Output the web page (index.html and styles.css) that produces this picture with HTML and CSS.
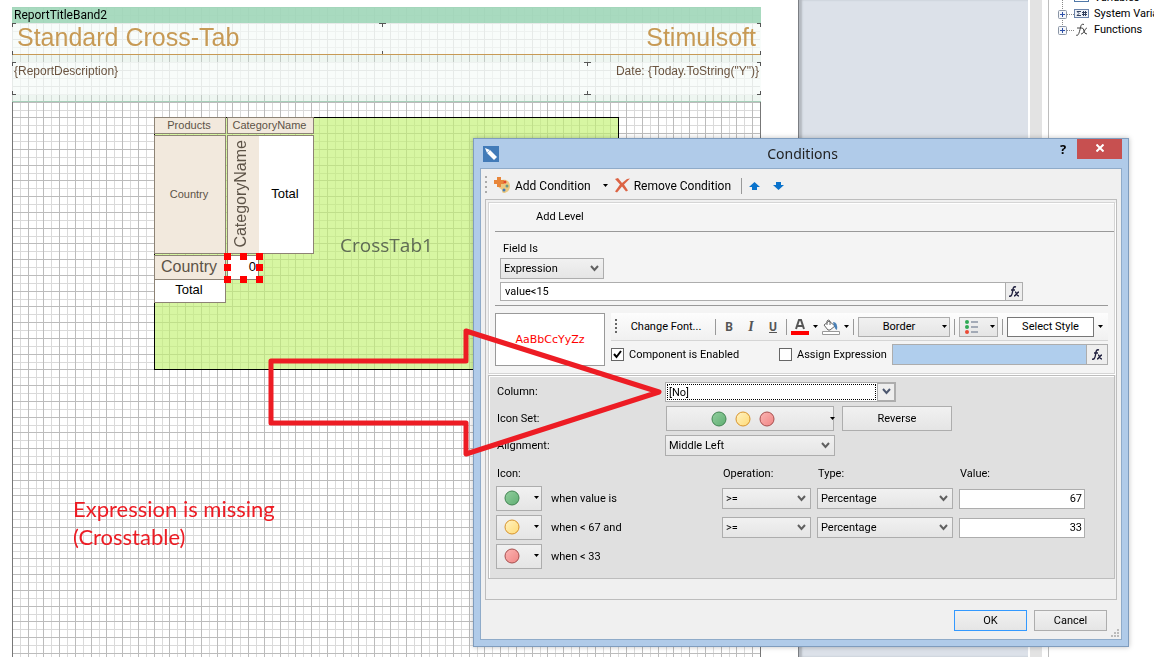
FILE: index.html
```html
<!DOCTYPE html>
<html lang="en">
<head>
  <meta charset="UTF-8">
  <meta name="viewport" content="width=device-width,initial-scale=1.0">
  <title>Conditions</title>
  <link rel="stylesheet" href="styles.css">
</head>
<body>

  <div class="workspace">
    <!-- Report page -->
    <main class="paper">
      <canvas id="gridCanvas"></canvas>

      <section class="band">
        <div class="band-header">ReportTitleBand2</div>
        <div class="band-title">
          <span>Standard Cross-Tab</span>
          <span>Stimulsoft</span>
        </div>
        <div class="band-info">
          <span>{ReportDescription}</span>
          <span>Date: {Today.ToString("Y")}</span>
        </div>
        <!-- Component corner marks -->
        <svg class="band-marks" width="749" height="95" viewBox="0 0 749 95">
          <path d="M0 16.5h4M.5 16v4M367 16.5h7M370.5 16v4M745 16.5h4M748.5 16v4M.5 44v4M370.5 44v3M748.5 44v4M0 55.5h4M.5 55v4M572 55.5h7M575.5 55v4M745 55.5h4M748.5 55v4M0 87.5h4M.5 84v4M572 87.5h7M575.5 84v4M745 87.5h4M748.5 84v4"/>
        </svg>
      </section>

      <!-- Cross-tab component -->
      <section class="crosstab">
        <span class="crosstab-name">CrossTab1</span>
        <div class="cell cell-products">Products</div>
        <div class="cell cell-category">CategoryName</div>
        <div class="cell cell-country">Country</div>
        <div class="cell cell-vertical"><span>CategoryName</span></div>
        <div class="cell cell-total-col">Total</div>
        <div class="cell cell-country-row">Country</div>
        <div class="cell cell-value">0</div>
        <div class="cell cell-total-row">Total</div>
        <svg class="handles" width="39" height="30" viewBox="0 0 39 30">
          <path d="M0 0h7v7H0zM16 0h7v7h-7zM32 0h7v7h-7zM0 11h7v7H0zM32 11h7v7h-7zM0 23h7v7H0zM16 23h7v7h-7zM32 23h7v7h-7z"/>
        </svg>
      </section>

      <p class="note">Expression is missing<br>(Crosstable)</p>
    </main>

    <div class="gutter"></div>
    <div class="scroll-strip"></div>

    <!-- Dictionary tree -->
    <aside class="dictionary">
      <ul class="tree">
        <li>
          <svg width="32" height="16" viewBox="0 0 32 16"><path class="dots" d="M5.5 0v16"/><rect x="17.5" y="3.5" width="14" height="8" fill="#fff" stroke="#5078a8"/></svg>
          Variables
        </li>
        <li>
          <svg width="32" height="16" viewBox="0 0 32 16">
            <path class="dots" d="M5.5 0v16M10 8.5h7"/>
            <rect class="plus-box" x="1.5" y="4.5" width="8" height="8" rx="1"/><path class="plus" d="M3 8.5h5M5.5 6v5"/>
            <rect x="17.5" y="3.5" width="14" height="8" fill="#eef2f8" stroke="#6a83aa"/>
            <path d="M24 5.5h-4l2 2-2 2h4M26.5 5v5M28.5 5v5M25 6.5h5M25 8.5h5" fill="none" stroke="#33415f"/>
          </svg>
          System Variables
        </li>
        <li>
          <svg width="32" height="16" viewBox="0 0 32 16">
            <path class="dots" d="M5.5 0v5M10 8.5h7"/>
            <rect class="plus-box" x="1.5" y="4.5" width="8" height="8" rx="1"/><path class="plus" d="M3 8.5h5M5.5 6v5"/>
            <path d="M27 2.5c-3-1-3 1-4 5s-2 7-4 5.500M20 6h5M25 6q1.500 0 2 3t3 3M30 6c-2 0-3 6-6 6" fill="none" stroke="#444"/>
          </svg>
          Functions
        </li>
      </ul>
    </aside>
  </div>

  <!-- Conditions window -->
  <div class="dialog" role="dialog" aria-labelledby="dialogTitle">
    <header class="titlebar">
      <svg class="app-icon" width="16" height="16" viewBox="0 0 16 16">
        <rect width="16" height="16" fill="#427bb8"/>
        <path d="M2 2l5 2 7 7-3 3-7-7z" fill="#fff"/><path d="M4 7l3-3" stroke="#a9c5e2"/>
      </svg>
      <h1 id="dialogTitle">Conditions</h1>
      <div class="window-buttons">
        <button class="help" type="button" aria-label="Help">?</button>
        <button class="close" type="button" aria-label="Close">
          <svg width="8" height="8" viewBox="0 0 8 8"><path d="M.5.5l7 7M7.5.5l-7 7" stroke="#fff" stroke-width="2"/></svg>
        </button>
      </div>
    </header>

    <form class="client">
      <div class="toolbar">
        <span class="grip"></span>
        <button class="tool" type="button">
          <svg width="17" height="17" viewBox="0 0 17 17">
            <path d="M8 3c5-1 8 2 8 6 0 5-4 7-6 7-3 0-1-3-3-4s-3-2-3-4z" fill="#ecc981"/>
            <path d="M3 0h4v3h3v4H7v3H3V7H0V3h3z" fill="#e8863a"/>
            <circle cx="11" cy="5" r="1.5" fill="#e3482c"/><circle cx="13" cy="9" r="1.5" fill="#6a9a8a"/><circle cx="10" cy="13" r="1.5" fill="#427bb8"/>
          </svg>
          Add Condition
          <svg class="drop" width="5" height="3" viewBox="0 0 5 3"><path d="M0 0h5L2.5 3z"/></svg>
        </button>
        <button class="tool" type="button">
          <svg width="15" height="15" viewBox="0 0 15 15"><path d="M0 1l3-1 4 5 5-4 3-.5-6 6 4 6-2 1-4-5-5 6-2-1 5-7z" fill="#dc6344"/></svg>
          Remove Condition
        </button>
        <span class="divider"></span>
        <button class="tool arrow" type="button" aria-label="Move up"><svg width="11" height="8" viewBox="0 0 11 8"><path d="M5.5 0L11 5H8v3H3V5H0z" fill="#0a73cc"/></svg></button>
        <button class="tool arrow" type="button" aria-label="Move down"><svg width="11" height="8" viewBox="0 0 11 8"><path d="M5.5 8L0 3h3V0h5v3h3z" fill="#0a73cc"/></svg></button>
      </div>

      <div class="panel">
        <!-- Condition -->
        <section class="level">
          <button class="add-level" type="button">Add Level</button>
          <div class="field">
            <label for="fieldIs">Field Is</label>
            <select id="fieldIs"><option>Expression</option></select>
            <div class="expression">
              <input type="text" value="value&lt;15" aria-label="Expression">
              <button class="fx" type="button" aria-label="Edit expression"><svg width="11" height="12" viewBox="0 0 11 12"><path d="M7 1C4 0 4 3 3.5 6S2 11 0 10M2 4h4M6 6c2 0 1 4 4 4M10 6c-2 0-3 4-5 4"/></svg></button>
            </div>
          </div>

          <div class="style-row">
            <div class="preview">AaBbCcYyZz</div>
            <div class="style-tools">
              <div class="format-bar">
                <span class="grip"></span>
                <button class="tool change-font" type="button">Change Font...</button>
                <span class="divider"></span>
                <button class="tool glyph" type="button"><b>B</b></button>
                <button class="tool glyph" type="button"><i>I</i></button>
                <button class="tool glyph" type="button"><u>U</u></button>
                <span class="divider"></span>
                <button class="tool" type="button" aria-label="Text color">
                  <svg width="18" height="16" viewBox="0 0 18 16"><path d="M5 10L8 1h2l3 9M6 7h6" fill="none" stroke="#555" stroke-width="2"/><path d="M0 12h18v4H0z" fill="red"/></svg>
                  <svg class="drop" width="5" height="3" viewBox="0 0 5 3"><path d="M0 0h5L2.5 3z"/></svg>
                </button>
                <button class="tool" type="button" aria-label="Fill color">
                  <svg width="18" height="16" viewBox="0 0 18 16">
                    <path d="M2 6l5-4 6 5-5 4H6zM5 6V2q1-2 3 0v4" fill="#fff" stroke="#666"/><path d="M11 3q5 0 4 8-2-1-3-4z" fill="#4a80b5"/>
                    <path d="M.5 12.5h17v3H.5z" fill="#fff" stroke="#999"/>
                  </svg>
                  <svg class="drop" width="5" height="3" viewBox="0 0 5 3"><path d="M0 0h5L2.5 3z"/></svg>
                </button>
                <span class="divider"></span>
                <button class="box border-box" type="button"><span>Border</span><svg class="drop" width="5" height="3" viewBox="0 0 5 3"><path d="M0 0h5L2.5 3z"/></svg></button>
                <span class="divider"></span>
                <button class="box icons-box" type="button" aria-label="Icon set">
                  <svg width="13" height="14" viewBox="0 0 13 14"><circle cx="2" cy="2" r="2" fill="#2faa55"/><circle cx="2" cy="7" r="2" fill="#2faa55"/><circle cx="2" cy="12" r="2" fill="#ea4a35"/><path d="M6 2h7M6 7h7M6 12h7" stroke="#8c95a5" stroke-width="1.5"/></svg>
                  <svg class="drop" width="5" height="3" viewBox="0 0 5 3"><path d="M0 0h5L2.5 3z"/></svg>
                </button>
                <span class="divider"></span>
                <button class="select-style" type="button">Select Style</button>
                <svg class="drop" width="5" height="3" viewBox="0 0 5 3"><path d="M0 0h5L2.5 3z"/></svg>
              </div>
              <div class="checks">
                <label class="enabled"><input type="checkbox" checked>Component is Enabled</label>
                <label><input type="checkbox" id="assign">Assign Expression</label>
                <div class="assigned">
                  <input type="text" aria-label="Assigned expression">
                  <button class="fx" type="button" aria-label="Edit expression"><svg width="11" height="12" viewBox="0 0 11 12"><path d="M7 1C4 0 4 3 3.5 6S2 11 0 10M2 4h4M6 6c2 0 1 4 4 4M10 6c-2 0-3 4-5 4"/></svg></button>
                </div>
              </div>
            </div>
          </div>
        </section>

        <!-- Icon set settings -->
        <section class="icon-set">
          <svg class="defs" width="0" height="0">
            <linearGradient id="green" x2="1" y2="1"><stop stop-color="#93cf9f"/><stop offset="1" stop-color="#5fae72"/></linearGradient>
            <linearGradient id="yellow" x2="1" y2="1"><stop stop-color="#fff3c4"/><stop offset="1" stop-color="#ffda75"/></linearGradient>
            <linearGradient id="red" x2="1" y2="1"><stop stop-color="#fbb5b3"/><stop offset="1" stop-color="#f08584"/></linearGradient>
          </svg>
          <div class="settings">
            <label for="column">Column:</label>
            <div class="combo">
              <select id="column"><option>[No]</option></select>
              <button type="button" aria-label="Open list"><svg width="9" height="7" viewBox="0 0 9 7"><path d="M1 1l3.5 4L8 1" fill="none" stroke="#4d5870" stroke-width="2"/></svg></button>
            </div>
            <span class="caption">Icon Set:</span>
            <div class="set-row">
              <button class="box set-button" type="button" aria-label="Icon Set">
                <span class="circles">
                  <svg width="16" height="16" viewBox="0 0 16 16"><circle cx="8" cy="8" r="7" fill="url(#green)" stroke="#438553"/></svg>
                  <svg width="16" height="16" viewBox="0 0 16 16"><circle cx="8" cy="8" r="7" fill="url(#yellow)" stroke="#d8942c"/></svg>
                  <svg width="16" height="16" viewBox="0 0 16 16"><circle cx="8" cy="8" r="7" fill="url(#red)" stroke="#a74f4e"/></svg>
                </span>
                <svg class="drop" width="5" height="3" viewBox="0 0 5 3"><path d="M0 0h5L2.5 3z"/></svg>
              </button>
              <button class="box reverse" type="button">Reverse</button>
            </div>
            <label for="alignment">Alignment:</label>
            <select id="alignment" class="alignment"><option>Middle Left</option></select>
          </div>

          <div class="rules">
            <span class="head">Icon:</span>
            <span></span>
            <span class="head">Operation:</span>
            <span class="head">Type:</span>
            <span class="head">Value:</span>

            <button class="box icon-button" type="button" aria-label="Green icon">
              <svg width="16" height="16" viewBox="0 0 16 16"><circle cx="8" cy="8" r="7" fill="url(#green)" stroke="#438553"/></svg>
              <svg class="drop" width="5" height="3" viewBox="0 0 5 3"><path d="M0 0h5L2.5 3z"/></svg>
            </button>
            <span>when value is</span>
            <select aria-label="Operation 1"><option>&gt;=</option></select>
            <select aria-label="Type 1"><option>Percentage</option></select>
            <input type="text" value="67" aria-label="Value 1">

            <button class="box icon-button" type="button" aria-label="Yellow icon">
              <svg width="16" height="16" viewBox="0 0 16 16"><circle cx="8" cy="8" r="7" fill="url(#yellow)" stroke="#d8942c"/></svg>
              <svg class="drop" width="5" height="3" viewBox="0 0 5 3"><path d="M0 0h5L2.5 3z"/></svg>
            </button>
            <span>when &lt; 67 and</span>
            <select aria-label="Operation 2"><option>&gt;=</option></select>
            <select aria-label="Type 2"><option>Percentage</option></select>
            <input type="text" value="33" aria-label="Value 2">

            <button class="box icon-button" type="button" aria-label="Red icon">
              <svg width="16" height="16" viewBox="0 0 16 16"><circle cx="8" cy="8" r="7" fill="url(#red)" stroke="#a74f4e"/></svg>
              <svg class="drop" width="5" height="3" viewBox="0 0 5 3"><path d="M0 0h5L2.5 3z"/></svg>
            </button>
            <span>when &lt; 33</span>
          </div>
        </section>
      </div>

      <footer class="actions">
        <button class="box ok" type="button">OK</button>
        <button class="box" type="button">Cancel</button>
      </footer>
      <svg class="resize" width="8" height="8" viewBox="0 0 8 8"><path d="M6 0h2v2H6zM3 3h2v2H3zM6 3h2v2H6zM0 6h2v2H0zM3 6h2v2H3zM6 6h2v2H6z" fill="#bbb"/></svg>
    </form>
  </div>

  <!-- Red arrow over the page and the window -->
  <svg class="pointer" width="400" height="140" viewBox="0 0 400 140">
    <path d="M6 41H201V11L394 72 201 134V103H6z"/>
  </svg>

  <script src="grid.js"></script>
</body>
</html>
```

FILE: styles.css
```css
:root {
  --frame: #b0cbe9;
  --frame-line: #7f9cbd;
  --line: #adadad;
  --gold: #c79a55;
  --brown: #6b5440;
  --chevron: url("data:image/svg+xml,%3Csvg xmlns='http://www.w3.org/2000/svg' width='9' height='7'%3E%3Cpath d='M1 1l3.5 4L8 1' fill='none' stroke='%23606060' stroke-width='2'/%3E%3C/svg%3E");
}

* {
  margin: 0;
  padding: 0;
  box-sizing: border-box;
}

body {
  font: 11px/16px Roboto, sans-serif;
  color: #000;
  background: #fff;
  overflow: hidden;
}

button, input, select {
  font: inherit;
  color: inherit;
}

svg {
  flex: none;
}

/* Workspace behind the window */
.workspace {
  display: flex;
  height: 100vh;
}

.paper {
  position: relative;
  flex: none;
  width: 799px;
  overflow: hidden;
  border-right: 1px solid #7b7e83;
  font-family: "Liberation Sans", sans-serif;
}

#gridCanvas {
  display: block;
}

.gutter {
  flex: none;
  width: 229px;
  background: #dce1e9;
  box-shadow: inset 3px 0 2px #b4b9c0;
}

.scroll-strip {
  flex: none;
  width: 12px;
  margin: 0 6px 0 2px;
  background: #e3e3e3;
}

.dictionary {
  flex: 1;
  overflow: hidden;
  border-left: 1px solid #bdbdbd;
}

.tree {
  list-style: none;
  padding-left: 8px;
  margin-top: -10px;
  white-space: nowrap;
}
.tree li {
  display: flex;
  gap: 5px;
  height: 16px;
}
.dots {
  stroke: #888;
  stroke-dasharray: 1 1;
}
.plus-box {
  fill: #f4f6fa;
  stroke: #8a95a5;
}
.plus {
  stroke: #2c4fa8;
}

/* Report title band */
.band {
  position: absolute;
  left: 12px;
  top: 7px;
  width: 749px;
  height: 95px;
  background: rgba(205, 230, 216, 0.35);
  border-bottom: 1px solid #a6cfb9;
}
.band-header {
  height: 16px;
  padding-left: 2px;
  background: rgba(161, 215, 186, 0.9);
  font: 12px/16px Roboto, sans-serif;
}
.band-title, .band-info {
  display: flex;
  justify-content: space-between;
  background: rgba(255, 255, 255, 0.6);
}
.band-title {
  height: 32px;
  padding: 0 5px;
  border-bottom: 1px solid var(--gold);
  color: var(--gold);
  font-size: 25px;
  line-height: 29px;
}
.band-info {
  height: 33px;
  margin-top: 7px;
  padding: 1px 2px 0;
  color: var(--brown);
  font-size: 12px;
}
.band-marks {
  position: absolute;
  left: 0;
  top: 0;
  fill: none;
  stroke: #555;
}

/* Cross-tab on the page */
.crosstab {
  position: absolute;
  left: 154px;
  top: 117px;
  width: 465px;
  height: 253px;
  background: rgba(193, 241, 112, 0.65);
  border: 1px solid #000;
}
.crosstab-name {
  position: absolute;
  left: 0;
  right: 0;
  top: 114px;
  text-align: center;
  color: #5f6b55;
  font: 19px/26px "Open Sans", sans-serif;
}
.cell {
  position: absolute;
  display: flex;
  align-items: center;
  justify-content: center;
  padding: 0 2px 2px 0;
  background: #f2e9dd;
  border: 1px solid #8d8375;
  color: #5d5347;
}
.cell-products {
  left: -1px;
  top: -1px;
  width: 72px;
  height: 17px;
}
.cell-category {
  left: 72px;
  top: -1px;
  width: 87px;
  height: 17px;
}
.cell-country {
  left: -1px;
  top: 17px;
  width: 72px;
  height: 119px;
}
.cell-vertical {
  left: 72px;
  top: 17px;
  width: 32px;
  height: 119px;
  padding-right: 5px;
  border-right: 0;
  font-size: 16px;
}
.cell-vertical span {
  writing-mode: vertical-rl;
  transform: rotate(180deg);
}
.cell-total-col {
  left: 104px;
  top: 17px;
  width: 55px;
  height: 119px;
  border-left: 0;
}
.cell-country-row {
  left: -1px;
  top: 137px;
  width: 72px;
  height: 25px;
  font-size: 16px;
}
.cell-value {
  left: 72px;
  top: 137px;
  width: 32px;
  height: 25px;
  justify-content: flex-end;
}
.cell-total-row {
  left: -1px;
  top: 161px;
  width: 72px;
  height: 24px;
}
.cell-total-col, .cell-total-row, .cell-value {
  background: #fff;
  color: #000;
  font-size: 13px;
}
.handles {
  position: absolute;
  left: 69px;
  top: 135px;
  fill: red;
}

.note {
  position: absolute;
  left: 73px;
  top: 495px;
  color: #ed1c24;
  font: 22px/28px Lato, sans-serif;
}

.pointer {
  position: absolute;
  left: 265px;
  top: 320px;
  pointer-events: none;
  fill: none;
  stroke: #ed1c24;
  stroke-width: 5;
  stroke-linejoin: round;
}

/* Conditions window */
.dialog {
  position: absolute;
  left: 473px;
  top: 138px;
  width: 656px;
  padding: 0 6px 6px;
  background: var(--frame);
  border: 1px solid var(--frame-line);
  box-shadow: 0 0 5px rgba(0, 0, 0, 0.25);
}

.titlebar {
  display: grid;
  grid-template-columns: 1fr auto 1fr;
  align-items: center;
  height: 29px;
  padding-left: 3px;
}
.titlebar h1 {
  font: 14px/20px "Noto Sans", sans-serif;
  color: #222;
}
.window-buttons {
  display: flex;
  justify-content: flex-end;
  align-self: start;
}
.window-buttons button {
  height: 20px;
  border: 0;
}
.help {
  width: 28px;
  background: none;
  font: bold 13px/20px "Open Sans", sans-serif;
}
.close {
  width: 45px;
  background: #c75050;
}

.client {
  position: relative;
  background: #f0f0f0;
  border: 1px solid #8fabc9;
  padding: 0 4px 8px;
}

.toolbar {
  display: flex;
  align-items: center;
  height: 30px;
  padding-top: 3px;
  font-size: 12px;
}
.grip {
  width: 2px;
  height: 20px;
  background: repeating-linear-gradient(#aaa 0 2px, transparent 2px 5px);
}
.tool {
  display: flex;
  align-items: center;
  gap: 4px;
  border: 0;
  background: none;
}
.toolbar .tool {
  margin-left: 7px;
}
.toolbar .drop {
  margin-left: 8px;
}
.toolbar .arrow {
  width: 17px;
}
.divider {
  width: 1px;
  height: 16px;
  background: #999;
}
.toolbar .divider {
  margin-left: 10px;
}

.panel {
  border: 1px solid #bdbdbd;
  height: 401px;
  padding: 2px 1px 0 2px;
}

.level {
  height: 172px;
  background: #f4f4f4;
  border: 1px solid #d5d5d5;
  box-shadow: inset 1px 1px #fff, 1px 1px #fff;
}
.add-level {
  display: block;
  width: 100%;
  height: 28px;
  padding-left: 47px;
  text-align: left;
  background: none;
  border: 0;
}
.field {
  display: grid;
  margin-left: 6px;
  padding: 9px 0 4px 5px;
  border-top: 1px solid #999;
}
.field label {
  padding-left: 3px;
}

select {
  appearance: none;
  height: 21px;
  padding: 0 20px 0 3px;
  border: 1px solid var(--line);
  border-radius: 0;
  background: var(--chevron) right 4px center no-repeat, linear-gradient(#f1f1f1, #e5e5e5);
}
#fieldIs {
  width: 104px;
  margin-top: 1px;
}
input[type="text"] {
  min-width: 0;
  border: 1px solid var(--line);
  background: #fff;
}
.expression {
  display: flex;
  width: 523px;
  max-width: 100%;
  height: 19px;
  margin-top: 3px;
}
.expression input, .assigned input {
  flex: 1;
  padding: 0 4px;
}
.fx {
  display: flex;
  align-items: center;
  justify-content: center;
  width: 18px;
  margin-left: -1px;
  border: 1px solid var(--line);
  background: #eee;
}
.fx path {
  fill: none;
  stroke: #222240;
  stroke-width: 1.4;
}

.style-row {
  display: flex;
  gap: 6px;
  margin: 0 6px;
  padding-top: 7px;
  border-top: 1px solid #999;
}
.preview {
  width: 110px;
  height: 53px;
  border: 1px solid #999;
  background: #fff;
  color: red;
  font: 11px/51px "DejaVu Sans", sans-serif;
  text-align: center;
}
.style-tools {
  flex: 1;
}
.format-bar {
  display: flex;
  align-items: center;
  gap: 4px;
  height: 28px;
  padding: 0 5px 0 4px;
  background: linear-gradient(#fdfdfd, #f0f0f0);
  border-bottom: 1px solid #d5d5d5;
}
.format-bar .grip {
  height: 15px;
  background: repeating-linear-gradient(#666 0 2px, transparent 2px 4px);
}
.format-bar .change-font {
  flex: 1;
  justify-content: center;
  white-space: nowrap;
}
.format-bar .glyph {
  width: 18px;
  justify-content: center;
  color: #555;
  font-size: 12px;
}
.glyph i {
  font-family: "Liberation Serif", serif;
  font-size: 14px;
  font-weight: bold;
}
.glyph u {
  font-weight: bold;
}

.box {
  display: flex;
  align-items: center;
  justify-content: center;
  border: 1px solid var(--line);
  background: linear-gradient(#f1f1f1, #e5e5e5);
}
.format-bar .box {
  height: 20px;
  padding: 0 2px;
}
.border-box {
  width: 92px;
}
.border-box span {
  flex: 1;
  padding-right: 5px;
}
.format-bar .icons-box {
  width: 39px;
  justify-content: space-between;
  padding-left: 5px;
}
.select-style {
  width: 87px;
  height: 20px;
  border: 1px solid #777;
  background: #fff;
}

.checks {
  display: flex;
  align-items: center;
  height: 21px;
  margin-top: 3px;
  white-space: nowrap;
}
.checks label {
  display: flex;
  align-items: center;
  gap: 5px;
  margin-right: 5px;
}
.checks .enabled {
  width: 163px;
}
input[type="checkbox"] {
  appearance: none;
  width: 13px;
  height: 13px;
  border: 1px solid #666;
  background: #fff;
}
input[type="checkbox"]:checked {
  background: #fff url("data:image/svg+xml,%3Csvg xmlns='http://www.w3.org/2000/svg' width='11' height='11'%3E%3Cpath d='M2 5l2.5 3L9 2' fill='none' stroke='%23000' stroke-width='2'/%3E%3C/svg%3E");
}
.assigned {
  display: flex;
  flex: 1;
  height: 21px;
}
.assigned input[type="text"] {
  background: #b0ceed;
}
.assigned .fx {
  width: 22px;
}

/* Icon set settings */
.icon-set {
  height: 204px;
  margin-top: 1px;
  padding: 6px 6px 5px 7px;
  background: #e0e0e0;
  border: 1px solid #bdbdbd;
  box-shadow: inset 1px 1px #fff;
}
.defs {
  position: absolute;
}
.settings {
  display: grid;
  grid-template-columns: 169px 1fr;
  row-gap: 4px;
  align-items: center;
}
.settings label, .settings .caption {
  padding-left: 1px;
}
.combo {
  display: flex;
  width: 231px;
  height: 20px;
  border: 1px solid var(--line);
  background: #fff;
}
.combo select {
  flex: 1;
  height: 16px;
  margin: 1px;
  padding: 0 1px;
  border: 1px dotted #000;
  background: #fff;
}
.combo button {
  width: 18px;
  border: 1px solid var(--line);
  background: #eee;
}
.set-row {
  display: flex;
  gap: 8px;
  padding-left: 1px;
}
.set-row .box {
  height: 25px;
}
.set-button {
  width: 168px;
  padding-right: 2px;
}
.circles {
  display: flex;
  flex: 1;
  justify-content: center;
  gap: 8px;
  padding-right: 55px;
  padding-left: 47px;
}
.reverse {
  width: 110px;
}
.alignment {
  width: 170px;
}

.rules {
  display: grid;
  grid-template-columns: 46px 168px 89px 136px 126px;
  column-gap: 6px;
  row-gap: 4px;
  align-items: center;
  margin-top: 10px;
}
.rules span {
  padding-left: 3px;
}
.rules .head {
  padding-left: 1px;
}
.rules input[type="text"] {
  height: 20px;
  padding: 0 2px;
  text-align: right;
}
.icon-button {
  height: 25px;
  justify-content: space-between;
  padding: 0 2px 2px 7px;
}

.actions {
  display: flex;
  justify-content: flex-end;
  gap: 7px;
  padding: 10px 10px 0 0;
}
.actions .box {
  width: 73px;
  height: 21px;
}
.actions .ok {
  border-color: #3399ff;
}
.resize {
  position: absolute;
  right: 2px;
  bottom: 2px;
}
```

FILE: grid.js
```javascript
// Design grid: a light line every 0.2 cm, a darker one every second step
const canvas = document.getElementById('gridCanvas');
const ctx = canvas.getContext('2d');
const step = 7.874;
const left = 12, right = 760, top0 = 23;

function drawLines(odd, color) {
  ctx.fillStyle = color;
  for (let i = odd; left + i * step < right; i += 2) {
    ctx.fillRect(Math.round(left + i * step), 7, 1, canvas.height);
  }
  for (let i = odd - 2; top0 + i * step < canvas.height; i += 2) {
    ctx.fillRect(left, Math.round(top0 + i * step), right - left, 1);
  }
}

function drawGrid() {
  canvas.width = 798;
  canvas.height = window.innerHeight;
  drawLines(1, '#dadada');
  drawLines(0, '#bcbcbc');
  ctx.fillStyle = '#777';
  ctx.fillRect(left, 102, 1, canvas.height);
  ctx.fillRect(right, 102, 1, canvas.height);
}

drawGrid();
window.addEventListener('resize', drawGrid);
```
